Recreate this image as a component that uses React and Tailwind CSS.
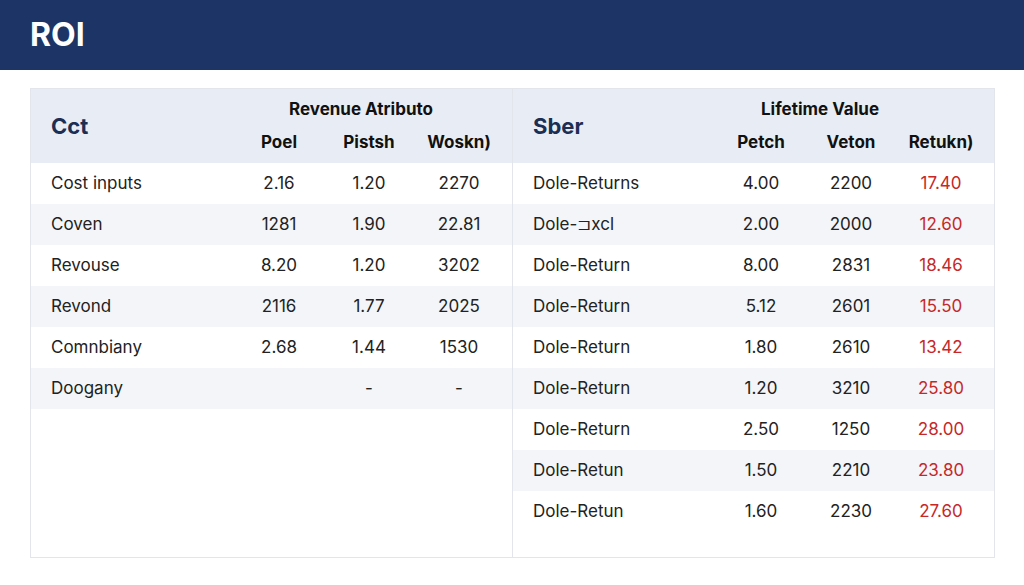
import React from 'react';

const left = [
  ['Cost inputs', '2.16', '1.20', '2270'],
  ['Coven', '1281', '1.90', '22.81'],
  ['Revouse', '8.20', '1.20', '3202'],
  ['Revond', '2116', '1.77', '2025'],
  ['Comnbiany', '2.68', '1.44', '1530'],
  ['Doogany', '', '-', '-'],
];

const right = [
  ['Dole-Returns', '4.00', '2200', '17.40'],
  ['Dole-\u2290xcl', '2.00', '2000', '12.60'],
  ['Dole-Return', '8.00', '2831', '18.46'],
  ['Dole-Return', '5.12', '2601', '15.50'],
  ['Dole-Return', '1.80', '2610', '13.42'],
  ['Dole-Return', '1.20', '3210', '25.80'],
  ['Dole-Return', '2.50', '1250', '28.00'],
  ['Dole-Retun', '1.50', '2210', '23.80'],
  ['Dole-Retun', '1.60', '2230', '27.60'],
];

const Panel = ({ title, group, groupClass, cols, rows, redLast, className }) => (
  <div className={`flex-1 ${className}`}>
    <div className="h-[74px] bg-[#e8edf5] grid grid-cols-[203px_90px_90px_90px] grid-rows-2">
      <div className="row-span-2 pl-5 flex items-center text-[22px] font-bold text-[#1b2f55]">{title}</div>
      <div className={`col-span-3 flex items-end text-[17px] font-bold text-[#111] ${groupClass}`}>{group}</div>
      {cols.map(c => (
        <div key={c} className="flex items-center justify-center text-[17px] font-bold text-[#111] pb-1">{c}</div>
      ))}
    </div>
    {rows.map((r, i) => (
      <div key={i} className={`h-[41px] grid grid-cols-[203px_90px_90px_90px] items-center text-[17px] text-[#222] ${i % 2 ? 'bg-[#f3f5f8]' : 'bg-white'}`}>
        <div className="pl-5">{r[0]}</div>
        <div className="text-center">{r[1]}</div>
        <div className="text-center">{r[2]}</div>
        <div className={`text-center ${redLast ? 'text-[#c62828]' : ''}`}>{r[3]}</div>
      </div>
    ))}
  </div>
);

export default function App() {
  return (
    <div className="w-[1024px] h-[585px] bg-white overflow-hidden" style={{ fontFamily: 'Inter, "Liberation Sans", sans-serif' }}>
      <div className="h-[70px] bg-[#1c3566] flex items-center px-[30px]">
        <span className="text-white text-[32px] font-bold">ROI</span>
      </div>
      <div className="mx-[30px] mt-[18px] h-[470px] w-[965px] border border-[#e2e6ec] flex">
        <Panel title="Cct" group="Revenue Atributo" groupClass="justify-center pr-4 pb-1" cols={['Poel', 'Pistsh', 'Woskn)']} rows={left} className="border-r border-[#e2e6ec]" />
        <Panel title="Sber" group="Lifetime Value" groupClass="justify-center pr-[62px] pb-1" cols={['Petch', 'Veton', 'Retukn)']} rows={right} redLast />
      </div>
    </div>
  );
}
